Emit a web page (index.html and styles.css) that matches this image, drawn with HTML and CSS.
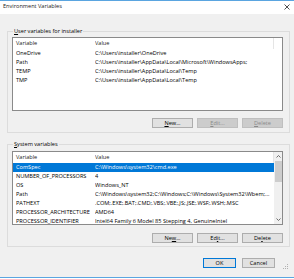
FILE: index.html
```html
<!DOCTYPE html>
<html>
<head>
<meta charset="utf-8">
<link rel="stylesheet" href="styles.css">
</head>
<body>
<div class="window">
  <div class="titlebar">
    <span class="title">Environment Variables</span>
    <svg class="close" width="6" height="6" viewBox="0 0 6 6"><path d="M0.5 0.5 L5.5 5.5 M5.5 0.5 L0.5 5.5" stroke="#222" stroke-width="0.8" fill="none"/></svg>
  </div>
  <div class="content">
    <fieldset class="group group-user">
      <legend><u>U</u>ser variables for installer</legend>
      <div class="list">
        <div class="row head"><span class="c1">Variable</span><span class="c2">Value</span></div>
        <div class="row"><span class="c1">OneDrive</span><span class="c2">C:\Users\installer\OneDrive</span></div>
        <div class="row"><span class="c1">Path</span><span class="c2">C:\Users\installer\AppData\Local\Microsoft\WindowsApps;</span></div>
        <div class="row"><span class="c1">TEMP</span><span class="c2">C:\Users\installer\AppData\Local\Temp</span></div>
        <div class="row"><span class="c1">TMP</span><span class="c2">C:\Users\installer\AppData\Local\Temp</span></div>
      </div>
      <div class="buttons">
        <button class="btn"><u>N</u>ew...</button>
        <button class="btn disabled"><u>E</u>dit...</button>
        <button class="btn disabled"><u>D</u>elete</button>
      </div>
    </fieldset>
    <fieldset class="group group-sys">
      <legend><u>S</u>ystem variables</legend>
      <div class="list sys">
        <div class="rows">
          <div class="row head"><span class="c1">Variable</span><span class="c2">Value</span></div>
          <div class="row sel"><span class="c1">ComSpec</span><span class="c2">C:\Windows\system32\cmd.exe</span></div>
          <div class="row"><span class="c1">NUMBER_OF_PROCESSORS</span><span class="c2">4</span></div>
          <div class="row"><span class="c1">OS</span><span class="c2">Windows_NT</span></div>
          <div class="row"><span class="c1">Path</span><span class="c2">C:\Windows\system32;C:\Windows;C:\Windows\System32\Wbem;...</span></div>
          <div class="row"><span class="c1">PATHEXT</span><span class="c2">.COM;.EXE;.BAT;.CMD;.VBS;.VBE;.JS;.JSE;.WSF;.WSH;.MSC</span></div>
          <div class="row"><span class="c1">PROCESSOR_ARCHITECTURE</span><span class="c2">AMD64</span></div>
          <div class="row"><span class="c1">PROCESSOR_IDENTIFIER</span><span class="c2">Intel64 Family 6 Model 85 Stepping 4, GenuineIntel</span></div>
        </div>
        <div class="scrollbar">
          <svg class="arrow" width="7" height="5" viewBox="0 0 7 5"><path d="M1.5 3.5 L3.5 1.5 L5.5 3.5" stroke="#606060" stroke-width="0.9" fill="none"/></svg>
          <div class="thumb"></div>
          <div class="track"></div>
          <svg class="arrow" width="7" height="5" viewBox="0 0 7 5"><path d="M1.5 1.5 L3.5 3.5 L5.5 1.5" stroke="#606060" stroke-width="0.9" fill="none"/></svg>
        </div>
      </div>
      <div class="buttons">
        <button class="btn">Ne<u>w</u>...</button>
        <button class="btn">Ed<u>i</u>t...</button>
        <button class="btn">De<u>l</u>ete</button>
      </div>
    </fieldset>
    <div class="footer">
      <button class="btn ok">OK</button>
      <button class="btn">Cancel</button>
      <svg class="grip" width="6" height="6" viewBox="0 0 6 6"><rect x="4" y="0" width="1" height="1" fill="#b0b0b0"/><rect x="2" y="2" width="1" height="1" fill="#b0b0b0"/><rect x="4" y="2" width="1" height="1" fill="#b0b0b0"/><rect x="0" y="4" width="1" height="1" fill="#b0b0b0"/><rect x="2" y="4" width="1" height="1" fill="#b0b0b0"/><rect x="4" y="4" width="1" height="1" fill="#b0b0b0"/></svg>
    </div>
  </div>
</div>
</body>
</html>
```

FILE: styles.css
```css
* { box-sizing: border-box; }
html, body { margin: 0; padding: 0; background: #ffffff; }
body {
  font-family: "Open Sans", "Noto Sans", "Liberation Sans", sans-serif;
  font-size: 5.6px;
  color: #000;
  width: 294px;
  height: 279px;
  overflow: hidden;
}
.window {
  width: 294px;
  height: 278px;
  background: #f0f0f0;
  border-top: 1px solid #5aa5e0;
  border-bottom: 1px solid #5aa5e0;
  display: flex;
  flex-direction: column;
}
.titlebar {
  height: 13px;
  background: #ffffff;
  display: flex;
  align-items: center;
  justify-content: space-between;
  padding: 0 4px 2px 3px;
  line-height: 1;
}
.title { font-size: 5.6px; color: #1a1a1a; }
.close { display: block; }
.content {
  flex: 1;
  display: flex;
  flex-direction: column;
  padding: 13px 4px 0 7px;
}
.group {
  margin: 0;
  padding: 2px 6px 4px 4px;
  border: 1px solid #dcdcdc;
  min-width: 0;
}
.group legend {
  padding: 0 1px;
  margin-left: 1px;
  line-height: 8px;
  height: 8px;
  font-size: 5.6px;
}
.group-sys { margin-top: 7px; padding-top: 3px; padding-bottom: 3px; }
.list {
  height: 74px;
  background: #ffffff;
  border: 1px solid #8a8a8a;
  overflow: hidden;
}
.list.sys { display: flex; }
.rows { flex: 1; min-width: 0; }
.row {
  display: flex;
  height: 9px;
  line-height: 9px;
  white-space: nowrap;
  overflow: hidden;
  width: 261px;
}
.row.head {
  height: 11px;
  line-height: 11px;
  color: #1a1a1a;
  border-right: 1px solid #e5e5e5;
}
.c1 { width: 82px; padding-left: 3px; flex: none; }
.c2 { flex: 1; overflow: hidden; }
.row.sel { background: #0078d7; color: #ffffff; }
.scrollbar {
  width: 8px;
  background: #f0f0f0;
  display: flex;
  flex-direction: column;
  align-items: center;
}
.arrow { display: block; margin-top: 2px; flex: none; }
.scrollbar .arrow:last-child { margin-top: 0; margin-bottom: 2px; }
.thumb { width: 7px; height: 21px; background: #cdcdcd; margin-top: 2px; flex: none; }
.track { flex: 1; }
.buttons {
  display: flex;
  justify-content: flex-end;
  gap: 4px;
  margin-top: 7px;
}
.group-sys .buttons { margin-top: 8px; }
.btn {
  width: 41px;
  height: 10px;
  padding: 0;
  margin: 0;
  font-family: inherit;
  font-size: 5.6px;
  line-height: 8px;
  color: #000;
  background: #e1e1e1;
  border: 1px solid #adadad;
  border-radius: 0;
}
.btn.disabled { background: #cccccc; border-color: #bfbfbf; color: #8a8a8a; }
.footer {
  display: flex;
  justify-content: flex-end;
  align-items: flex-start;
  gap: 6px;
  margin-top: 11px;
  position: relative;
  padding-right: 15px;
}
.footer .btn { width: 33px; }
.btn.ok { border: 1px solid #0078d7; }
.grip { position: absolute; right: 1px; top: 6px; }
```
